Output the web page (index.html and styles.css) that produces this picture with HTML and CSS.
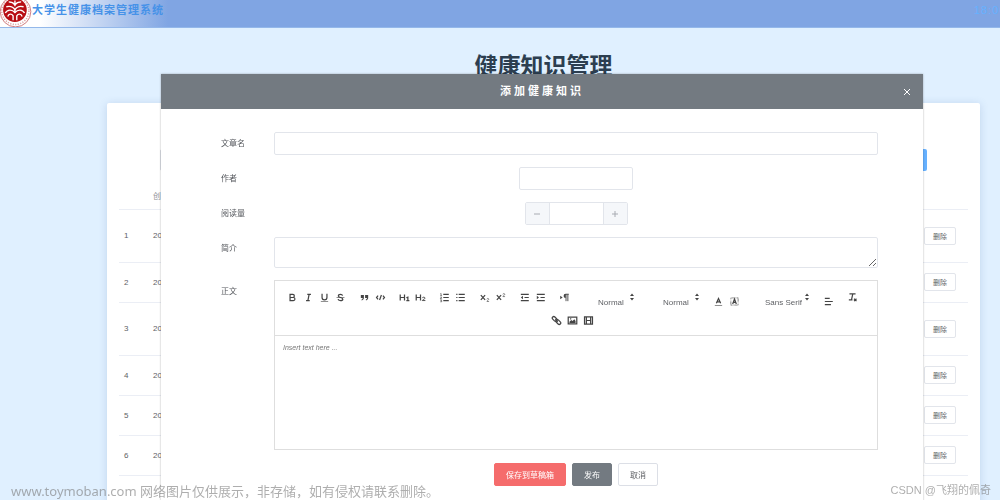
FILE: index.html
```html
<!DOCTYPE html>
<html lang="zh-CN">
<head>
<meta charset="utf-8">
<title>大学生健康档案管理系统</title>
<link rel="stylesheet" href="styles.css">
</head>
<body>
<div class="page">
  <header class="topbar">
    <svg class="logo" viewBox="0 0 33 28" aria-hidden="true">
      <circle cx="16" cy="11.500" r="15.800" fill="#fff" stroke="#c4585c" stroke-width=".8"/>
      <circle cx="15.800" cy="10.800" r="14" fill="none" stroke="#dba3a5" stroke-width="1.600" stroke-dasharray="1.200 1.400"/>
      <circle cx="15.400" cy="10" r="12.200" fill="#b80d14"/>
      <g fill="none" stroke="#fff" stroke-width="1.400">
        <path d="M15.400 0v6M9 1.500c3 0 5 1 6.400 3c1.400-2 3.400-3 6.400-3"/>
        <path d="M6.500 6.500c4-1 7 0 8.900 3c1.900-3 4.900-4 8.900-3"/>
        <path d="M5.500 13c2-4 7-4 9.900-.5c2.900-3.500 7.900-3.500 9.900.5"/>
        <path d="M8 16.500c1-3 4-3 5.500-.5v4.500M22.800 16.500c-1-3-4-3-5.500-.5v4.500M15.400 9v4"/>
      </g>
    </svg>
    <span class="brand">大学生健康档案管理系统</span>
    <time class="clock">18:00</time>
  </header>

  <main class="content">
    <h1 class="page-title">健康知识管理</h1>
    <section class="card">
      <div class="search">
        <input class="search-input" type="text" aria-label="搜索">
        <button class="search-button" type="button" aria-label="查询"></button>
      </div>
      <table class="articles">
        <thead>
          <tr><th class="col-no"></th><th>创建</th><th class="col-action"></th></tr>
        </thead>
        <tbody>
          <tr class="tall"><td class="col-no">1</td><td>202</td><td class="col-action"><button class="delete" type="button">删除</button></td></tr>
          <tr><td class="col-no">2</td><td>202</td><td class="col-action"><button class="delete" type="button">删除</button></td></tr>
          <tr class="tall"><td class="col-no">3</td><td>202</td><td class="col-action"><button class="delete" type="button">删除</button></td></tr>
          <tr><td class="col-no">4</td><td>202</td><td class="col-action"><button class="delete" type="button">删除</button></td></tr>
          <tr><td class="col-no">5</td><td>202</td><td class="col-action"><button class="delete" type="button">删除</button></td></tr>
          <tr><td class="col-no">6</td><td>202</td><td class="col-action"><button class="delete" type="button">删除</button></td></tr>
        </tbody>
      </table>
    </section>
  </main>
</div>

<div class="overlay">
  <section class="dialog" role="dialog" aria-labelledby="dialog-title">
    <header class="dialog-header">
      <h2 class="dialog-title" id="dialog-title">添加健康知识</h2>
      <button class="close" type="button" aria-label="关闭">
        <svg viewBox="0 0 8 8"><path d="M1 1l6 6M7 1l-6 6" stroke="#fff" stroke-width="1"/></svg>
      </button>
    </header>
    <form class="form">
      <div class="row">
        <label class="label" for="title">文章名</label>
        <div class="field"><input class="input" id="title" type="text"></div>
      </div>
      <div class="row">
        <label class="label" for="author">作者</label>
        <div class="field"><input class="input input-short" id="author" type="text"></div>
      </div>
      <div class="row">
        <label class="label" for="reads">阅读量</label>
        <div class="field">
          <div class="stepper">
            <button class="step" type="button" aria-label="减少"><svg viewBox="0 0 8 8"><path d="M1 4h6" stroke="#a8abb2"/></svg></button>
            <input class="step-input" id="reads" type="text">
            <button class="step" type="button" aria-label="增加"><svg viewBox="0 0 8 8"><path d="M1 4h6M4 1v6" stroke="#a8abb2"/></svg></button>
          </div>
        </div>
      </div>
      <div class="row">
        <label class="label" for="summary">简介</label>
        <div class="field"><textarea class="textarea" id="summary"></textarea></div>
      </div>
      <div class="row">
        <label class="label" for="body">正文</label>
        <div class="editor">
          <div class="toolbar">
            <span class="group">
              <button class="tool" type="button" aria-label="加粗"><svg viewBox="0 0 18 18"><path d="M5 4h4.500a2.500 2.500 0 0 1 0 5H5zM5 9h5.500a2.500 2.500 0 0 1 0 5H5z"/></svg></button>
              <button class="tool" type="button" aria-label="斜体"><svg viewBox="0 0 18 18"><path d="M7 4h6M5 14h6M8 14l2-10"/></svg></button>
              <button class="tool" type="button" aria-label="下划线"><svg viewBox="0 0 18 18"><path d="M5 3v6a4 4 0 0 0 8 0V3"/><path class="thin" d="M3 15.500h12"/></svg></button>
              <button class="tool" type="button" aria-label="删除线"><svg viewBox="0 0 18 18"><path class="thin" d="M2.500 9h13"/><path d="M12.500 6C12 4.500 10.500 4 9 4C7 4 5.500 5 5.500 6.500S7 8.500 9 9s3.800 1 3.800 2.700S11 14 9 14s-3.800-.8-4-2.500"/></svg></button>
            </span>
            <span class="group">
              <button class="tool" type="button" aria-label="引用"><svg viewBox="0 0 18 18"><path class="solid" d="M3 5h5v5c0 2-1.500 3.500-3.500 4l-.5-1.500C5.500 12 6 11 6 10H3zM10 5h5v5c0 2-1.500 3.500-3.500 4l-.5-1.500c1.500-.5 2-1.500 2-2.500h-3z"/></svg></button>
              <button class="tool" type="button" aria-label="代码"><svg viewBox="0 0 18 18"><path d="M5 6L2.500 9L5 12M13 6l2.500 3L13 12M10.500 5l-3 8"/></svg></button>
            </span>
            <span class="group">
              <button class="tool" type="button" aria-label="标题一"><svg viewBox="0 0 18 18"><path d="M2 4v10M9 4v10M2 9h7M12 9.500l2.500-1V14M12 14h5"/></svg></button>
              <button class="tool" type="button" aria-label="标题二"><svg viewBox="0 0 18 18"><path d="M2 4v10M9 4v10M2 9h7"/><path class="mid" d="M12 10c0-2 4.500-2 4.500 0c0 1.500-4.500 2.500-4.500 4h5"/></svg></button>
            </span>
            <span class="group">
              <button class="tool" type="button" aria-label="有序列表"><svg viewBox="0 0 18 18"><path d="M7 4h9M7 9h9M7 14h9"/><path class="thin" d="M2 3l1.500-.5V6M2 6h3M2 8.500h2.500L2 11h3M2 13h2.500L3 14.500h1.500V16H2"/></svg></button>
              <button class="tool" type="button" aria-label="无序列表"><svg viewBox="0 0 18 18"><path d="M6 4h10M6 9h10M6 14h10M2 4h2M2 9h2M2 14h2"/></svg></button>
            </span>
            <span class="group">
              <button class="tool" type="button" aria-label="下标"><svg viewBox="0 0 18 18"><path d="M3 5l7 8M10 5l-7 8"/><path class="thin" d="M13 12c0-2 3-2 3 0c0 1-3 2-3 3.500h3.500"/></svg></button>
              <button class="tool" type="button" aria-label="上标"><svg viewBox="0 0 18 18"><path d="M3 5l7 8M10 5l-7 8"/><path class="thin" d="M13 4c0-2 3-2 3 0c0 1-3 2-3 3.500h3.500"/></svg></button>
            </span>
            <span class="group">
              <button class="tool" type="button" aria-label="减少缩进"><svg viewBox="0 0 18 18"><path d="M3 4h13M3 14h13M9 9h7"/><path class="solid" d="M6.500 6v6L3 9z"/></svg></button>
              <button class="tool" type="button" aria-label="增加缩进"><svg viewBox="0 0 18 18"><path d="M3 4h13M3 14h13M9 9h7"/><path class="solid" d="M3 6v6l3.500-3z"/></svg></button>
            </span>
            <span class="group">
              <button class="tool" type="button" aria-label="文字方向"><svg viewBox="0 0 18 18"><path class="solid" d="M2 6v6l4-3zM11 3h5v1.500h-5zM11 3a3.500 3.500 0 0 0 0 7z"/><path class="mid" d="M11.500 4v11M14.500 4v11"/></svg></button>
            </span>
            <span class="group picker">
              <select class="select" aria-label="字号"><option>Normal</option></select>
              <svg class="arrows" viewBox="0 0 6 8"><path d="M1 3l2-2.500L5 3zM1 5l2 2.500L5 5z"/></svg>
            </span>
            <span class="group picker">
              <select class="select" aria-label="标题"><option>Normal</option></select>
              <svg class="arrows" viewBox="0 0 6 8"><path d="M1 3l2-2.500L5 3zM1 5l2 2.500L5 5z"/></svg>
            </span>
            <span class="group lowered">
              <button class="tool" type="button" aria-label="文字颜色"><svg viewBox="0 0 18 18"><path class="thin" d="M3 15.500h12"/><path d="M5.500 12L9 4l3.500 8M7 9.500h4"/></svg></button>
              <button class="tool" type="button" aria-label="背景颜色"><svg viewBox="0 0 18 18"><rect class="dotted" x="3" y="3" width="12" height="12"/><path d="M6 13L9 5l3 8M7 10.500h4"/></svg></button>
            </span>
            <span class="group picker picker-font">
              <select class="select" aria-label="字体"><option>Sans Serif</option></select>
              <svg class="arrows" viewBox="0 0 6 8"><path d="M1 3l2-2.500L5 3zM1 5l2 2.500L5 5z"/></svg>
            </span>
            <span class="group lowered">
              <button class="tool" type="button" aria-label="对齐"><svg viewBox="0 0 18 18"><path d="M3 4h8M3 9h13M3 14h10"/></svg></button>
            </span>
            <span class="group">
              <button class="tool" type="button" aria-label="清除格式"><svg viewBox="0 0 18 18"><path d="M4 3h10M9.500 3L7.500 12M3 13h6M11.500 11l4 4M15.500 11l-4 4"/></svg></button>
            </span>
            <span class="group">
              <button class="tool" type="button" aria-label="链接"><svg viewBox="0 0 18 18"><rect x="1.500" y="4" width="9" height="5" rx="2.500" transform="rotate(45 6 6.500)"/><rect x="7.500" y="9" width="9" height="5" rx="2.500" transform="rotate(45 12 11.500)"/><path d="M7 7l4 4"/></svg></button>
              <button class="tool" type="button" aria-label="图片"><svg viewBox="0 0 18 18"><path d="M2 3.500h14v11H2z"/><path class="solid" d="M4 13v-2l3-3l2 2l3-3l2 3v3zM5 5.500h2v2H5z"/></svg></button>
              <button class="tool" type="button" aria-label="视频"><svg viewBox="0 0 18 18"><path d="M2.500 3h13v12h-13zM5.500 3v12M12.500 3v12M5.500 9h7"/></svg></button>
            </span>
          </div>
          <textarea class="editor-body" id="body" placeholder="Insert text here ..."></textarea>
        </div>
      </div>
      <div class="actions">
        <button class="button button-danger" type="button">保存到草稿箱</button>
        <button class="button button-dark" type="button">发布</button>
        <button class="button" type="button">取消</button>
      </div>
    </form>
  </section>
</div>

<p class="mark mark-left">www.toymoban.com 网络图片仅供展示，非存储，如有侵权请联系删除。</p>
<p class="mark mark-right">CSDN @飞翔的佩奇</p>
</body>
</html>
```

FILE: styles.css
```css
* {
  box-sizing: border-box;
}

body {
  margin: 0;
  background: #e0f0ff;
  color: #606266;
  font-family: "Liberation Sans", "Noto Sans CJK SC", sans-serif;
  font-size: 8px;
}

button,
input,
select,
textarea {
  margin: 0;
  padding: 0;
  color: inherit;
  font: inherit;
}

.page {
  height: 100vh;
  overflow: hidden;
}

.topbar {
  display: flex;
  height: 28px;
  overflow: hidden;
  border-bottom: 1px solid #94b8ea;
  background: linear-gradient(to right, #fff 40px, #80a5e3 168px);
}

.logo {
  flex: none;
  width: 32px;
  height: 28px;
}

.brand {
  color: #4692e8;
  font-size: 11px;
  font-weight: 700;
  letter-spacing: 1px;
  line-height: 21px;
}

.clock {
  flex: none;
  width: 26px;
  margin-left: auto;
  overflow: hidden;
  color: #66b1ff;
  font-size: 11px;
  letter-spacing: 1px;
  line-height: 21px;
  white-space: nowrap;
}

.page-title {
  margin: 0;
  padding: 19px 0 18px;
  color: #2c3e50;
  font-size: 23px;
  line-height: 38px;
  text-align: center;
}

.content {
  padding: 0 20px 0 107px;
}

.card {
  min-height: 420px;
  padding: 46px 12px 0;
  border-radius: 2px;
  background: #fff;
  box-shadow: 0 1px 8px rgba(60, 100, 160, 0.2);
}

.search {
  display: flex;
  padding: 0 41px;
}

.search-input {
  flex: 1;
  height: 22px;
  border: 1px solid #dcdfe6;
  border-radius: 2px;
}

.search-button {
  width: 40px;
  border: 0;
  border-radius: 2px;
  background: #66b1ff;
}

.articles {
  width: 100%;
  margin-top: 11px;
  border-collapse: collapse;
}

.articles th,
.articles td {
  height: 40px;
  padding: 0;
  border-bottom: 1px solid #ebeef5;
  text-align: left;
}

.articles th {
  height: 27px;
  color: #909399;
  font-weight: 400;
}

.articles .tall td {
  height: 53px;
}

.articles .col-no {
  width: 34px;
  padding-left: 5px;
}

.articles .col-action {
  padding-right: 12px;
  text-align: right;
}

.delete {
  width: 32px;
  height: 18px;
  border: 1px solid #e2e5eb;
  border-radius: 2px;
  background: #fff;
  font-size: 7px;
}

.overlay {
  position: fixed;
  inset: 0;
  overflow: hidden;
}

.dialog {
  margin: 74px 77px 0 161px;
  background: #fff;
  box-shadow: 0 0 2px rgba(0, 0, 0, 0.3);
}

.dialog-header {
  display: flex;
  align-items: center;
  height: 35px;
  padding: 0 12px 0 20px;
  background: #737a81;
  color: #fff;
}

.dialog-title {
  flex: 1;
  margin: 0;
  font-size: 11px;
  letter-spacing: 3px;
  line-height: 35px;
  text-align: center;
}

.close {
  display: flex;
  width: 8px;
  height: 8px;
  border: 0;
  background: none;
}

.form {
  display: flex;
  flex-direction: column;
  gap: 12px;
  padding: 23px 45px 32px 60px;
}

.row {
  display: flex;
}

.label {
  flex: none;
  width: 53px;
  color: #54575c;
  line-height: 23px;
}

.field {
  display: flex;
  flex: 1;
  justify-content: center;
}

.input,
.textarea,
.stepper {
  border: 1px solid #e2e5eb;
  border-radius: 2px;
  background: #fff;
}

.input {
  width: 100%;
  height: 23px;
}

.input-short {
  width: 114px;
}

.textarea {
  width: 100%;
  height: 31px;
  resize: vertical;
}

.stepper {
  display: flex;
  width: 103px;
  height: 23px;
  overflow: hidden;
}

.step {
  display: flex;
  align-items: center;
  justify-content: center;
  width: 23px;
  border: 0;
  background: #f5f7fa;
}

.step svg {
  width: 8px;
  height: 8px;
}

.step-input {
  flex: 1;
  min-width: 0;
  border: solid #e2e5eb;
  border-width: 0 1px;
}

.editor {
  display: flex;
  flex: 1;
  flex-direction: column;
  border: 1px solid #dedede;
}

.toolbar {
  display: flex;
  flex-wrap: wrap;
  align-items: flex-start;
  justify-content: center;
  row-gap: 2px;
  padding: 8px 8px 7px;
  border-bottom: 1px solid #dedede;
}

.group {
  display: flex;
  margin-right: 8px;
}

.lowered {
  padding-top: 4px;
}

.tool {
  display: flex;
  align-items: center;
  justify-content: center;
  width: 16px;
  height: 16px;
  border: 0;
  background: none;
}

.tool svg {
  width: 11px;
  height: 11px;
  fill: none;
  stroke: #444;
  stroke-width: 2;
}

.tool .thin {
  stroke-width: 1;
}

.tool .mid {
  stroke-width: 1.5;
}

.tool .solid {
  fill: #444;
  stroke: none;
}

.tool .dotted {
  stroke: #777;
  stroke-width: 2;
  stroke-dasharray: 1 1;
}

.picker {
  position: relative;
  width: 57px;
  padding-top: 6px;
}

.picker-font {
  width: 62px;
}

.select {
  width: 100%;
  height: 15px;
  padding-left: 15px;
  border: 0;
  background: none;
  appearance: none;
}

.picker:not(.picker-font) .select {
  padding-left: 18px;
}

.arrows {
  position: absolute;
  top: 4px;
  right: 2px;
  width: 6px;
  height: 8px;
  fill: #444;
}

.editor-body {
  height: 113px;
  padding: 8px;
  border: 0;
  outline: 0;
  background: none;
  resize: none;
}

.editor-body::placeholder {
  color: #777;
  font-size: 7px;
  font-style: italic;
}

.actions {
  display: flex;
  justify-content: center;
  gap: 6px;
  padding: 1px 0 0 53px;
}

.button {
  height: 23px;
  padding: 0 11px;
  border: 1px solid #dcdfe6;
  border-radius: 2px;
  background: #fff;
}

.button-danger {
  border-color: #f56c6c;
  background: #f56c6c;
  color: #fff;
}

.button-dark {
  border-color: #737a81;
  background: #737a81;
  color: #fff;
}

.mark {
  position: fixed;
  margin: 0;
  color: rgba(120, 120, 120, 0.6);
  font-family: "Noto Sans", "Noto Sans CJK SC", sans-serif;
  white-space: nowrap;
}

.mark-left {
  bottom: 0;
  left: 11px;
  font-size: 13px;
  line-height: 18px;
}

.mark-right {
  right: 9px;
  bottom: 2px;
  font-family: "Liberation Sans", "Noto Sans CJK SC", sans-serif;
  font-size: 11px;
  line-height: 16px;
}
```
